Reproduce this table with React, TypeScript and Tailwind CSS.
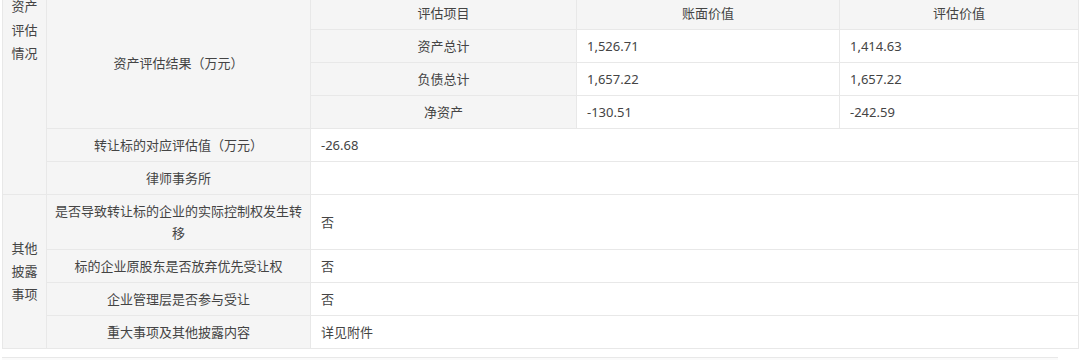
import React from 'react';

const font = { fontFamily: '"Noto Sans", "Noto Sans CJK SC", sans-serif' };

const labelCell = 'bg-[#f5f5f5] border border-[#e8e8e8] text-center align-middle px-[6px] py-[5px]';
const valueCell = 'bg-white border border-[#e8e8e8] text-left align-middle px-[10px] py-[5px]';

const assetRows = [
  { item: '资产总计', book: '1,526.71', value: '1,414.63' },
  { item: '负债总计', book: '1,657.22', value: '1,657.22' },
  { item: '净资产', book: '-130.51', value: '-242.59' },
];

const disclosureRows = [
  { label: '是否导致转让标的企业的实际控制权发生转移', value: '否' },
  { label: '标的企业原股东是否放弃优先受让权', value: '否' },
  { label: '企业管理层是否参与受让', value: '否' },
  { label: '重大事项及其他披露内容', value: '详见附件' },
];

export default function App() {
  return (
    <div className="h-[360px] w-[1080px] overflow-hidden bg-white" style={font}>
      <table className="-mt-[4px] ml-[2px] w-[1076px] table-fixed border-collapse text-[13px] leading-[22px] text-[#444]">
        <colgroup>
          <col className="w-[44px]" />
          <col className="w-[264px]" />
          <col className="w-[266px]" />
          <col className="w-[263px]" />
          <col className="w-[239px]" />
        </colgroup>
        <tbody>
          <tr className="h-[33px]">
            <td rowSpan={6} className="bg-[#f5f5f5] border border-[#e8e8e8] text-center align-top px-[6px] pt-0">
              <div className="-mt-[2px] leading-[23.5px]">资产评估情况</div>
            </td>
            <td rowSpan={4} className={labelCell}>资产评估结果（万元）</td>
            <td className={labelCell}>评估项目</td>
            <td className={labelCell}>账面价值</td>
            <td className={labelCell}>评估价值</td>
          </tr>
          {assetRows.map((r) => (
            <tr key={r.item} className="h-[33px]">
              <td className={labelCell}>{r.item}</td>
              <td className={valueCell}>{r.book}</td>
              <td className={valueCell}>{r.value}</td>
            </tr>
          ))}
          <tr className="h-[33px]">
            <td className={labelCell}>转让标的对应评估值（万元）</td>
            <td colSpan={3} className={valueCell}>-26.68</td>
          </tr>
          <tr className="h-[33px]">
            <td className={labelCell}>律师事务所</td>
            <td colSpan={3} className={valueCell}></td>
          </tr>
          {disclosureRows.map((r, i) => (
            <tr key={r.label} className={i === 0 ? 'h-[55px]' : 'h-[33px]'}>
              {i === 0 && (
                <td rowSpan={4} className="bg-[#f5f5f5] border border-[#e8e8e8] text-center align-middle px-[6px]">
                  <div className="leading-[23px]">其他披露事项</div>
                </td>
              )}
              <td className={labelCell}>{r.label}</td>
              <td colSpan={3} className={valueCell}>{r.value}</td>
            </tr>
          ))}
        </tbody>
      </table>
      <div className="mt-[8px] ml-[2px] w-[1056px] h-[4px] border-t border-[#e8e8e8] bg-[#fafafa]"></div>
    </div>
  );
}
